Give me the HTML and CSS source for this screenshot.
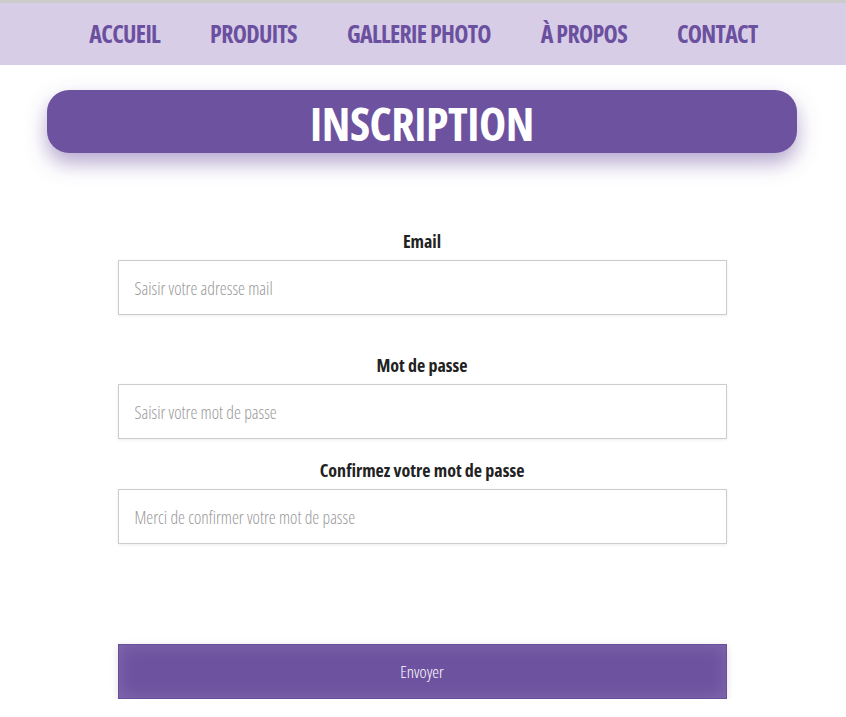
FILE: index.html
```html
<!DOCTYPE html>
<html lang="fr">
<head>
<meta charset="utf-8">
<title>Inscription</title>
<link rel="stylesheet" href="styles.css">
</head>
<body>
<header class="topbar">
  <nav class="nav">
    <a class="nav-link" href="#">ACCUEIL</a>
    <a class="nav-link" href="#">PRODUITS</a>
    <a class="nav-link" href="#">GALLERIE PHOTO</a>
    <a class="nav-link" href="#">À PROPOS</a>
    <a class="nav-link" href="#">CONTACT</a>
  </nav>
</header>
<main class="main">
  <h1 class="title">INSCRIPTION</h1>
  <form class="form">
    <div class="field field-email">
      <label class="label" for="email">Email</label>
      <input class="input" id="email" type="email" placeholder="Saisir votre adresse mail">
    </div>
    <div class="field field-pass">
      <label class="label" for="pass">Mot de passe</label>
      <input class="input" id="pass" type="password" placeholder="Saisir votre mot de passe">
    </div>
    <div class="field field-confirm">
      <label class="label" for="confirm">Confirmez votre mot de passe</label>
      <input class="input" id="confirm" type="password" placeholder="Merci de confirmer votre mot de passe">
    </div>
    <button class="submit" type="button">Envoyer</button>
  </form>
</main>
</body>
</html>
```
FILE: styles.css
```css
html, body {
  margin: 0;
  padding: 0;
  background: #ffffff;
  font-family: "Open Sans", "Liberation Sans", sans-serif;
  font-stretch: 75%;
}

.topbar {
  border-top: 3px solid #cccccc;
  background: #d7cde6;
  height: 62px;
  display: flex;
  align-items: center;
  justify-content: center;
}

.nav {
  display: flex;
  gap: 50px;
  padding-left: 1px;
  padding-bottom: 1px;
}

.nav-link {
  color: #6b50a0;
  text-decoration: none;
  font-weight: 700;
  font-size: 24px;
  font-stretch: 75%;
  letter-spacing: -0.7px;
}

.main {
  display: flex;
  flex-direction: column;
  align-items: center;
}

.title {
  margin: 25px 2px 0 0;
  width: 750px;
  height: 63px;
  box-sizing: border-box;
  padding-top: 3px;
  border-radius: 22px;
  background: #6d52a0;
  color: #ffffff;
  font-size: 46px;
  font-weight: 700;
  font-stretch: 75%;
  letter-spacing: -0.5px;
  line-height: 60px;
  text-align: center;
  box-shadow: 0 10px 20px rgba(109, 82, 160, 0.5);
}

.form {
  width: 609px;
  display: flex;
  flex-direction: column;
  margin: 76px 2px 0 0;
}

.field {
  display: flex;
  flex-direction: column;
  align-items: center;
}

.field-pass {
  margin-top: 38px;
}

.field-confirm {
  margin-top: 19px;
}

.label {
  font-size: 18px;
  font-weight: 700;
  color: #222222;
  line-height: 24px;
  margin-bottom: 7px;
}

.input {
  width: 100%;
  height: 55px;
  box-sizing: border-box;
  border: 1px solid #cccccc;
  box-shadow: 0 1px 3px rgba(0, 0, 0, 0.08);
  padding: 0 16px;
  font-family: "Open Sans", "Liberation Sans", sans-serif;
  font-stretch: 75%;
  font-weight: 300;
  font-size: 17.5px;
  color: #333333;
  outline: none;
}

.input::placeholder {
  color: #999999;
}

.submit {
  margin-top: 100px;
  width: 100%;
  height: 55px;
  border: 1px solid #6a4f9f;
  background: #6d52a0;
  box-shadow: inset 0 0 18px rgba(255, 255, 255, 0.14), 0 2px 8px rgba(0, 0, 0, 0.12);
  color: #ffffff;
  font-family: "Open Sans", "Liberation Sans", sans-serif;
  font-stretch: 75%;
  font-weight: 300;
  font-size: 17px;
  cursor: pointer;
}
```
